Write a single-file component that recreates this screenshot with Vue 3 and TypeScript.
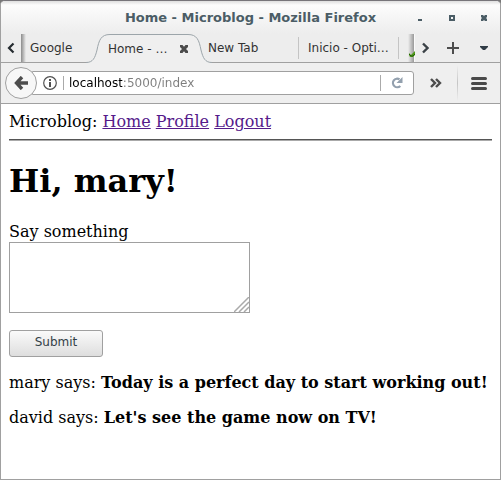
<script setup lang="ts">
import { ref } from 'vue'

interface Post {
  author: string
  body: string
}

const address = ref('localhost:5000/index')
const message = ref('')
const username = 'mary'
const links = ['Home', 'Profile', 'Logout']
const posts = ref<Post[]>([
  { author: 'mary', body: 'Today is a perfect day to start working out!' },
  { author: 'david', body: "Let's see the game now on TV!" },
])

function submitPost() {
  if (!message.value.trim()) return
  posts.value.unshift({ author: username, body: message.value })
  message.value = ''
}
</script>

<template>
  <div class="window">
    <header class="titlebar">
      <span class="title">Home - Microblog - Mozilla Firefox</span>
      <div class="controls">
        <button type="button" aria-label="Minimize">
          <svg width="8" height="8" viewBox="0 0 8 8"><path d="M2 5h4v2H2z" fill="#4b5d66" /></svg>
        </button>
        <button type="button" aria-label="Maximize">
          <svg width="8" height="8" viewBox="0 0 8 8"><path d="M1 1h6v6H1zM3 3v2h2V3z" fill="#4b5d66" fill-rule="evenodd" /></svg>
        </button>
        <button type="button" aria-label="Close window">
          <svg width="8" height="8" viewBox="0 0 8 8"><path d="M1 1h2l1 1 1-1h2v2L6 4l1 1v2H5L4 6 3 7H1V5l1-1-1-1z" fill="#4b5d66" /></svg>
        </button>
      </div>
    </header>

    <nav class="tabstrip" aria-label="Tabs">
      <button type="button" class="scroll-left" aria-label="Scroll tabs left">
        <svg width="8" height="12" viewBox="0 0 8 12"><path d="M6.500 1.500L2 6l4.500 4.500" fill="none" stroke="#252b30" stroke-width="2.200" /></svg>
      </button>
      <div class="tabs">
        <button type="button" class="tab first">Google</button>
        <div class="tab active">
          <svg class="curve" width="24" height="29" viewBox="0 0 24 29">
            <path d="M0 29V28.500C7 28.500 9 24 11 16C13 6 15 .5 24 .5V29Z" fill="#efefef" />
            <path d="M0 28.500C7 28.500 9 24 11 16C13 6 15 .5 24 .5" fill="none" stroke="#9ca5aa" />
          </svg>
          <div class="active-body">
            <button type="button" class="label">Home - …</button>
            <button type="button" class="close" aria-label="Close tab">
              <svg width="8" height="8" viewBox="0 0 8 8"><path d="M0 0h2.500L4 1.800 5.500 0H8v2L6 4l2 2v2H5.500L4 6.200 2.500 8H0V6l2-2-2-2z" fill="#4b4b4b" /></svg>
            </button>
          </div>
          <svg class="curve" width="24" height="29" viewBox="0 0 24 29">
            <path d="M24 29V28.500C17 28.500 15 24 13 16C11 6 9 .5 0 .5V29Z" fill="#efefef" />
            <path d="M24 28.500C17 28.500 15 24 13 16C11 6 9 .5 0 .5" fill="none" stroke="#9ca5aa" />
          </svg>
        </div>
        <button type="button" class="tab new">New Tab</button>
        <button type="button" class="tab opti">Inicio - Opti…</button>
        <span class="peek">
          <svg width="6" height="8" viewBox="0 0 6 8"><path d="M0 3l2 2 4-4v4L4 7H1L0 5z" fill="#4e9a17" /><path d="M0 4l2 2h2l2-2" fill="none" stroke="#245c0c" /></svg>
        </span>
      </div>
      <button type="button" class="scroll-right" aria-label="Scroll tabs right">
        <svg width="8" height="12" viewBox="0 0 8 12"><path d="M2 1.500L6.500 6 2 10.500" fill="none" stroke="#3b4247" stroke-width="2.400" /></svg>
      </button>
      <button type="button" class="add" aria-label="New tab">
        <svg width="12" height="12" viewBox="0 0 12 12"><path d="M5 0h2v5h5v2H7v5H5V7H0V5h5z" fill="#4d4d4d" /></svg>
      </button>
      <button type="button" class="list" aria-label="List all tabs">
        <svg width="8" height="6" viewBox="0 0 8 6"><path d="M0 1h8v1L5 5H3L0 2z" fill="#303c46" /></svg>
      </button>
    </nav>

    <div class="toolbar">
      <button type="button" class="back" aria-label="Back">
        <svg width="14" height="14" viewBox="0 0 14 14"><path d="M8 1L2.500 7 8 13M3 7H14" fill="none" stroke="#4d4d4d" stroke-width="3.400" /></svg>
      </button>
      <div class="urlbar">
        <button type="button" class="info" aria-label="Site information">
          <svg width="14" height="14" viewBox="0 0 14 14">
            <circle cx="7" cy="7" r="6.300" fill="none" stroke="#505050" stroke-width="1.200" />
            <path d="M6 3h2v2H6zM6 6h2v5H6z" fill="#505050" />
          </svg>
        </button>
        <input v-model="address" class="address" type="text" aria-label="Address" spellcheck="false" />
        <button type="button" class="reload" aria-label="Reload">
          <svg width="12" height="12" viewBox="0 0 12 12">
            <path d="M8.500 2.300A4.300 4.300 0 1 0 9.300 9" fill="none" stroke="#93a0ae" stroke-width="2.200" />
            <path d="M11.500 0v6H5.500z" fill="#93a0ae" />
          </svg>
        </button>
      </div>
      <button type="button" class="more" aria-label="More tools">
        <svg width="12" height="10" viewBox="0 0 12 10"><path d="M1 1l4 4-4 4M6 1l4 4-4 4" fill="none" stroke="#4d4d4d" stroke-width="2.400" /></svg>
      </button>
      <button type="button" class="menu" aria-label="Open menu">
        <svg width="16" height="14" viewBox="0 0 16 14"><path d="M1.500 2.500h13M1.500 7.500h13M1.500 12.500h13" stroke="#4a4a4a" stroke-width="3" stroke-linecap="round" /></svg>
      </button>
    </div>

    <main class="page">
      <div>
        Microblog:
        <template v-for="link in links" :key="link"><a :href="'#' + link.toLowerCase()">{{ link }}</a>{{ ' ' }}</template>
      </div>
      <hr />
      <h1>Hi, {{ username }}!</h1>
      <form @submit.prevent="submitPost">
        <label for="post">Say something</label>
        <div class="field">
          <textarea id="post" v-model="message"></textarea>
          <svg class="grip" width="15" height="15" viewBox="0 0 15 15"><path d="M0 15L15 0M5 15L15 5M10 15l5-5" stroke="#aaa" stroke-width="1.500" /></svg>
        </div>
        <button type="submit" class="submit">Submit</button>
      </form>
      <p v-for="post in posts" :key="post.body">{{ post.author }} says: <b>{{ post.body }}</b></p>
    </main>
  </div>
</template>

<style>
body {
  margin: 0;
  background: #777;
}
</style>

<style scoped>
.window {
  box-sizing: border-box;
  min-height: 100vh;
  display: flex;
  flex-direction: column;
  border: 1px solid #a0a0a0;
  border-top-color: #77757a;
  border-radius: 5px 5px 0 0;
  background: #fff;
  overflow: hidden;
  font-family: "DejaVu Sans", sans-serif;
  font-size: 12px;
}
button {
  margin: 0;
  padding: 0;
  border: 0;
  background: none;
  font: inherit;
  color: inherit;
}
svg {
  display: block;
  flex: none;
}
.titlebar {
  display: grid;
  grid-template-columns: 1fr auto 1fr;
  align-items: center;
  height: 33px;
  background: linear-gradient(#dedede, #fcfcfc 4px, #ededed);
}
.title {
  grid-column: 2;
  font-size: 13px;
  font-weight: bold;
  color: #4b5d66;
}
.controls {
  display: flex;
  justify-content: flex-end;
  gap: 24px;
  padding-right: 12px;
}
.tabstrip {
  display: flex;
  height: 28px;
  border-bottom: 1px solid #a0a0a0;
  background: #ededed;
  color: #333;
}
.tabstrip > button {
  display: flex;
  align-items: center;
  justify-content: center;
}
.scroll-left {
  width: 20px;
}
.scroll-right {
  width: 20px;
}
.add {
  width: 36px;
}
.list {
  width: 29px;
  padding-right: 3px;
}
.tabs {
  flex: 1;
  min-width: 0;
  display: flex;
  height: 29px;
}
.tab {
  min-width: 0;
  height: 28px;
  padding-bottom: 1px;
  white-space: nowrap;
  text-align: left;
}
.first {
  flex: 1 1 65px;
  padding-left: 9px;
  background: linear-gradient(90deg, #8b8b8b, #ededed 5px);
}
.active {
  flex: 1 1 126px;
  display: flex;
  height: 29px;
  padding-bottom: 0;
}
.active-body {
  flex: 1;
  min-width: 0;
  display: flex;
  align-items: center;
  justify-content: space-between;
  border-top: 1px solid #9ca5aa;
  background: #efefef;
}
.label {
  flex: 1;
  margin-left: -2px;
  text-align: left;
}
.new {
  flex: 1 1 91px;
}
.opti {
  flex: 1 1 100px;
  padding-left: 9px;
}
.new,
.opti {
  background: linear-gradient(#c4c4c4, #c4c4c4) right center / 1px 22px no-repeat;
}
.new {
  margin-left: -4px;
}
.peek {
  width: 16px;
  height: 28px;
  box-sizing: border-box;
  padding: 16px 0 0 10px;
  border-right: 1px solid #fafafa;
  background: linear-gradient(90deg, #ededed 9px, #999);
}
.toolbar {
  display: flex;
  align-items: center;
  height: 40px;
  border-bottom: 1px solid #a0a0a0;
  background: #efefef;
}
.back {
  z-index: 1;
  box-sizing: border-box;
  display: flex;
  align-items: center;
  justify-content: center;
  width: 32px;
  height: 32px;
  margin-left: 4px;
  border: 1px solid #a0a0a0;
  border-radius: 50%;
  background: #f7f7f7;
}
.urlbar {
  box-sizing: border-box;
  flex: 1;
  min-width: 0;
  display: flex;
  align-items: center;
  height: 24px;
  margin-left: -5px;
  padding-left: 10px;
  border: 1px solid #a0a0a0;
  border-radius: 0 3px 3px 0;
  background: #fff;
}
.info {
  padding-right: 6px;
  border-right: 1px solid #aaa;
}
.address {
  flex: 1;
  min-width: 0;
  height: 22px;
  padding: 0 5px;
  border: 0;
  outline: 0;
  font: inherit;
  color: transparent;
  background: linear-gradient(90deg, #000 58px, #7d7d7d 58px);
  background-clip: text;
  -webkit-background-clip: text;
}
.reload {
  padding: 2px 10px;
  border-left: 1px solid #aaa;
}
.more {
  display: flex;
  justify-content: center;
  width: 43px;
}
.menu {
  display: flex;
  align-items: center;
  justify-content: center;
  width: 43px;
  height: 36px;
  background: linear-gradient(#efefef, #c4c4c4, #efefef) left center / 1px 36px no-repeat;
}
.page {
  flex: 1;
  padding: 8px;
  font-family: "DejaVu Serif", serif;
  font-size: 16px;
  line-height: 19px;
  color: #000;
}
.page a {
  color: #551a8b;
}
hr {
  margin: 8px 0 21px;
  border: 0;
  border-top: 1px solid #555;
  border-bottom: 1px solid #aaa;
}
h1 {
  margin: 0 0 22px;
  font-size: 32px;
  line-height: 38px;
}
label {
  display: block;
  padding-bottom: 1px;
}
.field {
  position: relative;
  width: 241px;
  max-width: 100%;
  height: 71px;
}
textarea {
  display: block;
  box-sizing: border-box;
  width: 100%;
  height: 100%;
  border: 1px solid #a0a0a0;
  resize: none;
  outline: 0;
}
.grip {
  position: absolute;
  right: 1px;
  bottom: 1px;
  pointer-events: none;
}
.submit {
  display: block;
  width: 94px;
  height: 27px;
  margin-top: 17px;
  padding-bottom: 2px;
  border: 1px solid #a0a0a0;
  border-radius: 3px;
  background: linear-gradient(#fafafa, #dedede);
  font-family: "DejaVu Sans", sans-serif;
  font-size: 12px;
  color: #334047;
}
p {
  margin: 16px 0;
}
</style>
